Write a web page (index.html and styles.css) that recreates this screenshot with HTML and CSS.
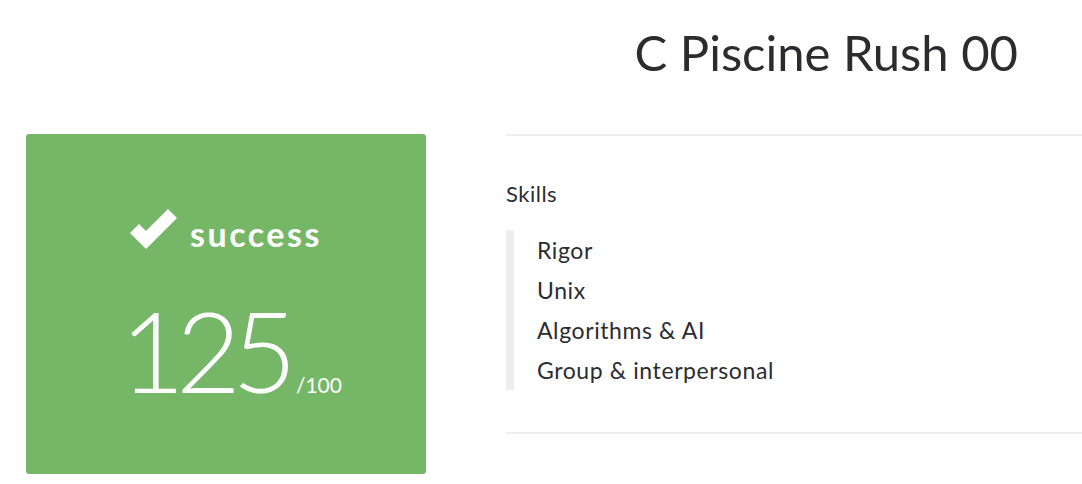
FILE: index.html
```html
<!DOCTYPE html>
<html>
<head>
<meta charset="utf-8">
<link rel="stylesheet" href="styles.css">
</head>
<body>
<header class="head">
  <h1 class="title">C Piscine Rush 00</h1>
</header>
<main class="row">
  <div class="score">
    <div class="status">
      <svg class="check" viewBox="0 0 48 42" width="48" height="42"><path d="M0 24 L9 15 L16 22 L38 0 L47 9 L16 40 Z" fill="#fff"/></svg>
      <span class="status-text">success</span>
    </div>
    <div class="mark"><span class="num">125</span><span class="max">/100</span></div>
  </div>
  <section class="details">
    <div class="skills">
      <div class="skills-label">Skills</div>
      <ul class="skill-list">
        <li>Rigor</li>
        <li>Unix</li>
        <li>Algorithms &amp; AI</li>
        <li>Group &amp; interpersonal</li>
      </ul>
    </div>
  </section>
</main>
</body>
</html>
```
FILE: styles.css
```css
html, body { margin: 0; padding: 0; background: #fff; }
body { font-family: "Lato", "Noto Sans", sans-serif; color: #2c2c30; width: 1082px; height: 484px; overflow: hidden; }
.head { display: flex; justify-content: flex-end; padding: 20px 64px 0 0; height: 134px; box-sizing: border-box; }
.title { margin: 0; font-weight: 400; font-size: 49px; line-height: 64px; letter-spacing: 0; }
.row { display: flex; gap: 80px; padding-left: 26px; }
.score { width: 400px; height: 340px; background: #76b767; border-radius: 3px; display: flex; flex-direction: column; align-items: center; color: #fff; box-sizing: border-box; padding-top: 74px; }
.status { display: flex; align-items: center; gap: 12px; height: 50px; }
.check { display: block; margin-top: -6px; }
.status-text { font-size: 34px; font-weight: 700; letter-spacing: 2.5px; }
.mark { display: flex; align-items: baseline; margin-top: 42px; padding-left: 10px; }
.num { font-size: 112px; font-weight: 300; line-height: 100px; letter-spacing: -9px; }
.max { font-size: 21px; font-weight: 400; margin-left: 8px; }
.details { flex: 1; border-top: 2px solid #eeeeee; border-bottom: 2px solid #eeeeee; height: 300px; box-sizing: border-box; }
.skills { padding-top: 44px; }
.skills-label { font-size: 22px; line-height: 28px; letter-spacing: 0.5px; }
.skill-list { list-style: none; margin: 22px 0 0 0; padding: 0 0 0 23px; border-left: 8px solid #eeeeee; }
.skill-list li { font-size: 23px; line-height: 40px; letter-spacing: 0.6px; }
```
